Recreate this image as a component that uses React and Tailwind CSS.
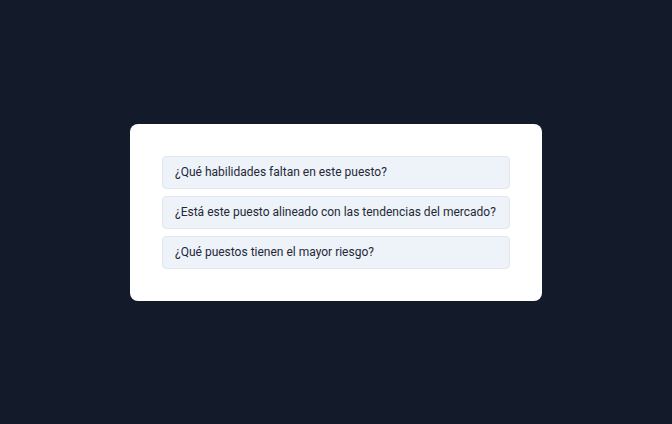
import React from 'react';

const questions = [
  '¿Qué habilidades faltan en este puesto?',
  '¿Está este puesto alineado con las tendencias del mercado?',
  '¿Qué puestos tienen el mayor riesgo?',
];

const App = () => {
  return (
    <div className="w-full h-screen bg-[#131b2b] flex items-center justify-center" style={{ fontFamily: 'Roboto, "Noto Sans", sans-serif' }}>
      <div className="w-[412px] bg-white rounded-lg px-8 py-8 flex flex-col gap-[7px]">
        {questions.map((q) => (
          <button
            key={q}
            className="h-[33px] w-full text-left px-3 rounded bg-[#eef2f9] border border-[#e2e6ee] text-[12px] text-[#1f2937]"
          >
            {q}
          </button>
        ))}
      </div>
    </div>
  );
};

export default App;
